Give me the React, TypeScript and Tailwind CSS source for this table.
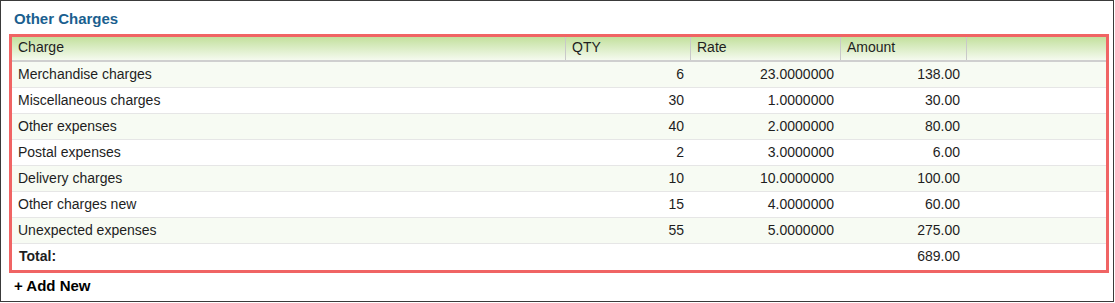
const rows = [
    { name: 'Merchandise charges', qty: '6', rate: '23.0000000', amount: '138.00' },
    { name: 'Miscellaneous charges', qty: '30', rate: '1.0000000', amount: '30.00' },
    { name: 'Other expenses', qty: '40', rate: '2.0000000', amount: '80.00' },
    { name: 'Postal expenses', qty: '2', rate: '3.0000000', amount: '6.00' },
    { name: 'Delivery charges', qty: '10', rate: '10.0000000', amount: '100.00' },
    { name: 'Other charges new', qty: '15', rate: '4.0000000', amount: '60.00' },
    { name: 'Unexpected expenses', qty: '55', rate: '5.0000000', amount: '275.00' },
]

const cols = "grid grid-cols-[554px_125px_150px_126px_1fr]"

function App() {
    return (
        <div className="w-[1114px] h-[302px] border border-[#3a3a3a] bg-white text-[#1e1e1e]" style={{ fontFamily: '"Liberation Sans", Arial, sans-serif' }}>
            <h2 className="pl-[13px] pt-[9px] text-[15px] leading-[18px] font-bold text-[#1a5f8f]">Other Charges</h2>
            <div className="ml-[8px] mt-[6px] w-[1100px] border-[3px] border-[#f06464]">
                <div className={`${cols} h-[25px] border-b-2 border-[#cfcfcf] bg-gradient-to-b from-[#c3e09d] to-[#f5faef] text-[14px] leading-[21px]`}>
                    <div className="pl-[6px] border-r border-[#c9c9c9]">Charge</div>
                    <div className="pl-[6px] border-r border-[#c9c9c9]">QTY</div>
                    <div className="pl-[6px] border-r border-[#c9c9c9]">Rate</div>
                    <div className="pl-[6px] border-r border-[#c9c9c9]">Amount</div>
                    <div></div>
                </div>
                {rows.map((r, i) => (
                    <div key={r.name} className={`${cols} h-[26px] border-b border-[#e6e6e6] text-[14px] leading-[24px] ${i % 2 === 0 ? 'bg-[#f7fbf3]' : 'bg-white'}`}>
                        <div className="pl-[6px]">{r.name}</div>
                        <div className="pr-[7px] text-right">{r.qty}</div>
                        <div className="pr-[7px] text-right">{r.rate}</div>
                        <div className="pr-[7px] text-right">{r.amount}</div>
                        <div></div>
                    </div>
                ))}
                <div className={`${cols} h-[26px] text-[14px] leading-[24px]`}>
                    <div className="pl-[7px] font-bold">Total:</div>
                    <div></div>
                    <div></div>
                    <div className="pr-[7px] text-right">689.00</div>
                    <div></div>
                </div>
            </div>
            <button className="pl-[13px] pt-[4px] text-[15px] leading-[18px] font-bold text-black">+ Add New</button>
        </div>
    )
}

export default App
